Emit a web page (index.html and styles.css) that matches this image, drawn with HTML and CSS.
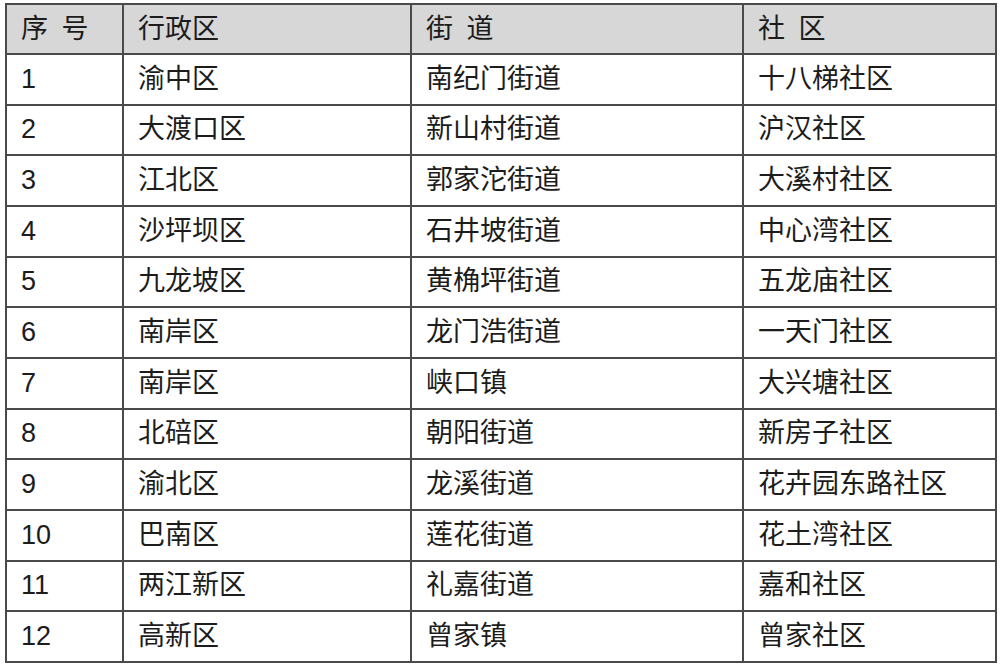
FILE: index.html
```html
<!DOCTYPE html>
<html lang="zh-CN">
<head>
<meta charset="utf-8">
<title>社区列表</title>
<link rel="stylesheet" href="styles.css">
</head>
<body>
<table class="list">
  <colgroup>
    <col class="c1"><col class="c2"><col class="c3"><col class="c4">
  </colgroup>
  <thead>
    <tr><th>序 号</th><th>行政区</th><th>街 道</th><th>社 区</th></tr>
  </thead>
  <tbody>
    <tr><td>1</td><td>渝中区</td><td>南纪门街道</td><td>十八梯社区</td></tr>
    <tr><td>2</td><td>大渡口区</td><td>新山村街道</td><td>沪汉社区</td></tr>
    <tr><td>3</td><td>江北区</td><td>郭家沱街道</td><td>大溪村社区</td></tr>
    <tr><td>4</td><td>沙坪坝区</td><td>石井坡街道</td><td>中心湾社区</td></tr>
    <tr><td>5</td><td>九龙坡区</td><td>黄桷坪街道</td><td>五龙庙社区</td></tr>
    <tr><td>6</td><td>南岸区</td><td>龙门浩街道</td><td>一天门社区</td></tr>
    <tr><td>7</td><td>南岸区</td><td>峡口镇</td><td>大兴塘社区</td></tr>
    <tr><td>8</td><td>北碚区</td><td>朝阳街道</td><td>新房子社区</td></tr>
    <tr><td>9</td><td>渝北区</td><td>龙溪街道</td><td>花卉园东路社区</td></tr>
    <tr><td>10</td><td>巴南区</td><td>莲花街道</td><td>花土湾社区</td></tr>
    <tr><td>11</td><td>两江新区</td><td>礼嘉街道</td><td>嘉和社区</td></tr>
    <tr><td>12</td><td>高新区</td><td>曾家镇</td><td>曾家社区</td></tr>
  </tbody>
</table>
</body>
</html>
```
FILE: styles.css
```css
html, body {
  margin: 0;
  padding: 0;
  background: #ffffff;
}
body {
  padding: 3px 5px 0 5px;
  font-family: "Liberation Sans", "Noto Sans CJK SC", sans-serif;
  color: #1c1c1c;
}
.list {
  border-collapse: collapse;
  table-layout: fixed;
  width: 990px;
  height: 660px;
  border: 2px solid #4a4a4a;
}
.c1 { width: 117px; }
.c2 { width: 288px; }
.c3 { width: 332px; }
.c4 { width: 253px; }
.list th,
.list td {
  border: 2px solid #4a4a4a;
  padding: 0 0 0 14px;
  font-size: 27px;
  font-weight: normal;
  text-align: left;
  vertical-align: middle;
  height: 48px;
  line-height: 1;
  white-space: pre;
}
.list thead th {
  background: #d7d7d7;
  word-spacing: 6px;
}
```
